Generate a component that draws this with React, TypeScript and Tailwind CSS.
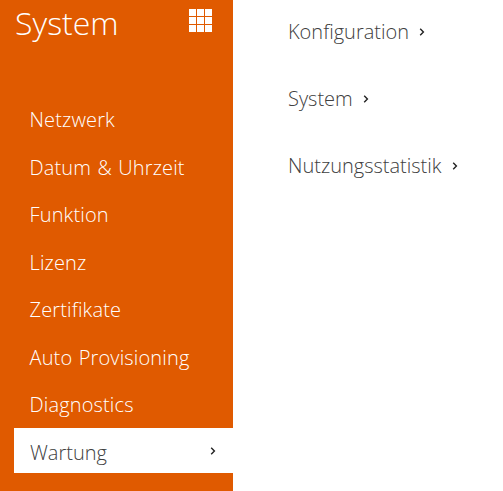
import React from "react";

const items = ["Netzwerk", "Datum & Uhrzeit", "Funktion", "Lizenz", "Zertifikate", "Auto Provisioning", "Diagnostics"];
const links = ["Konfiguration", "System", "Nutzungsstatistik"];

function Chevron({ className }: { className: string }) {
  return (
    <svg viewBox="0 0 6 8" className={className} fill="none" stroke="currentColor" strokeWidth="1.4">
      <path d="M1.2 0.8 L4.4 4 L1.2 7.2" />
    </svg>
  );
}

export default function App() {
  return (
    <div className="flex h-[491px] w-[503px] overflow-hidden bg-white font-['Open_Sans','Noto_Sans',sans-serif] font-light">
      <div className="flex h-full w-[233px] shrink-0 flex-col bg-[#e05a00] pl-[14px] text-white">
        <div className="flex h-[96px] items-start justify-between pr-[21px]">
          <span className="ml-[1px] mt-[1px] text-[32px] leading-[44px]">System</span>
          <div className="mt-[9px] grid h-[23px] w-[23px] grid-cols-3 gap-[1px]">
            {Array.from({ length: 9 }).map((_, i) => (
              <div key={i} className="bg-white" />
            ))}
          </div>
        </div>
        <div className="flex flex-col">
          {items.map((t) => (
            <div key={t} className="h-[47.5px] pl-[15.5px] text-[20px] leading-[47.5px] tracking-[0.15px] [word-spacing:1px]">{t}</div>
          ))}
          <div className="-mt-[0.5px] flex h-[45px] items-center justify-between bg-white pl-[16px] pr-[17px] text-[20px] text-[#404040]">
            <span className="pt-[5px]">Wartung</span>
            <Chevron className="h-[8px] w-[6px] text-[#222]" />
          </div>
        </div>
      </div>
      <div className="flex flex-col gap-[35px] pl-[55px] pt-[16px] text-[20px] leading-[32px] text-[#404040]">
        {links.map((t) => (
          <div key={t} className="flex items-center gap-[10px]">
            <span>{t}</span>
            <Chevron className="h-[8px] w-[6px] text-[#222]" />
          </div>
        ))}
      </div>
    </div>
  );
}
